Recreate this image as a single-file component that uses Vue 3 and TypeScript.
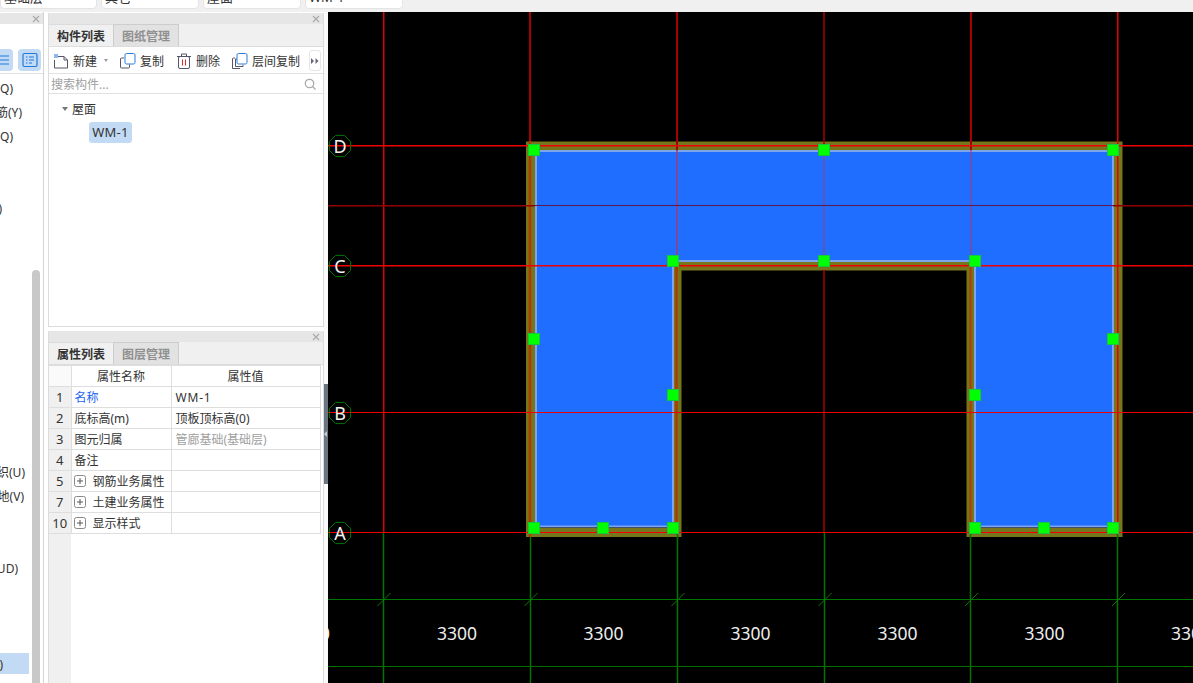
<template>
  <div class="root">
    <div class="topbar">
      <div v-for="c in combos" :key="c" class="combo">{{ c }}</div>
    </div>

    <div class="body">
      <!-- clipped left tree -->
      <aside class="strip">
        <div class="pane-head">
          <svg class="close" viewBox="0 0 8 8"><path d="M1 1l6 6M7 1L1 7" /></svg>
        </div>
        <div class="strip-tools">
          <div class="strip-btn first">
            <svg viewBox="0 0 13 22" width="13" height="22">
              <path d="M0 7h9M0 11h9M0 15h9" stroke="#1f7ae0" stroke-width="1.2" fill="none" />
            </svg>
          </div>
          <div class="strip-btn second">
            <svg viewBox="0 0 16 16" width="16" height="16">
              <rect x="1" y="1.5" width="14" height="13" rx="1.5" fill="none" stroke="#1f7ae0" stroke-width="1.2" />
              <path d="M4 5h1.5M7 5h5M4 8h1.5M7 8h5M4 11h1.5M7 11h3" stroke="#1f7ae0" stroke-width="1.1" fill="none" />
            </svg>
          </div>
        </div>
        <div class="strip-list">
          <div
            v-for="(r, i) in stripRows"
            :key="i"
            class="strip-row"
            :class="{ selected: r.selected }"
            :style="{ paddingRight: 29 - r.right + 'px' }"
          >
            {{ r.text }}
          </div>
        </div>
        <div class="strip-scroll"></div>
      </aside>

      <div class="middle">
        <section class="panel panel-top">
          <div class="pane-head">
            <svg class="close" viewBox="0 0 8 8"><path d="M1 1l6 6M7 1L1 7" /></svg>
          </div>
          <div class="tabs">
            <div class="tab active">构件列表</div>
            <div class="tab">图纸管理</div>
          </div>
          <div class="toolbar">
            <div class="tool tool-new">
              <svg viewBox="0 0 16 16" width="16" height="16">
                <path d="M4 3.5h7l3.5 3.5v8h-13V7" fill="none" stroke="#556" stroke-width="1" />
                <path d="M11 3.5V7h3.5" fill="none" stroke="#556" stroke-width="1" />
                <rect x="1" y="1" width="4" height="4" fill="#3b82e6" />
                <path d="M2 1v4M4 1v4M1 2h4M1 4h4" stroke="#fff" stroke-width=".5" />
              </svg>
              <span>新建</span>
              <i class="caret"></i>
            </div>
            <div class="tool tool-copy">
              <svg viewBox="0 0 16 16" width="16" height="16">
                <path d="M4 5H1.500a1 1 0 0 0-1 1v8a1 1 0 0 0 1 1h7a1 1 0 0 0 1-1v-2.500" fill="none" stroke="#556" />
                <rect x="5" y="0.500" width="10" height="10.500" rx="1.500" fill="#fff" stroke="#2b7de0" />
              </svg>
              <span>复制</span>
            </div>
            <div class="tool tool-del">
              <svg viewBox="0 0 14 16" width="14" height="16">
                <path d="M0 3.500h14M4.500 3V1h5v2" fill="none" stroke="#556" />
                <rect x="1.500" y="3.500" width="11" height="12" rx="1.500" fill="none" stroke="#556" />
                <path d="M5.500 6.500v6M8.500 6.500v6" stroke="#e0242c" />
              </svg>
              <span>删除</span>
            </div>
            <div class="tool tool-floor">
              <svg viewBox="0 0 16 16" width="16" height="16">
                <path d="M3 5H1.500a1 1 0 0 0-1 1v9.500H8" fill="none" stroke="#556" />
                <path d="M5 6H3.500v7.500H11V12" fill="none" stroke="#556" />
                <rect x="5" y="0.500" width="10" height="10.500" rx="1.500" fill="#fff" stroke="#2b7de0" />
              </svg>
              <span>层间复制</span>
            </div>
            <div class="more">
              <svg viewBox="0 0 8 6" width="8" height="6"><path d="M0 0l3 3-3 3zM4.500 0l3 3-3 3z" fill="#667" /></svg>
            </div>
          </div>
          <div class="search">
            <span>搜索构件...</span>
            <svg viewBox="0 0 12 12" width="12" height="12">
              <circle cx="5.500" cy="5.500" r="4.200" fill="none" stroke="#aaa" stroke-width="1.300" />
              <path d="M8.500 8.500l3 3" stroke="#aaa" stroke-width="1.300" />
            </svg>
          </div>
          <div class="tree">
            <div class="tree-node"><i class="tree-caret"></i>屋面</div>
            <div class="tree-leaf">WM-1</div>
          </div>
        </section>

        <section class="panel panel-bottom">
          <div class="pane-head">
            <svg class="close" viewBox="0 0 8 8"><path d="M1 1l6 6M7 1L1 7" /></svg>
          </div>
          <div class="tabs">
            <div class="tab active">属性列表</div>
            <div class="tab">图层管理</div>
          </div>
          <table class="props">
            <colgroup>
              <col class="c-num" />
              <col class="c-name" />
              <col class="c-val" />
            </colgroup>
            <thead>
              <tr>
                <th class="corner"></th>
                <th>属性名称</th>
                <th>属性值</th>
              </tr>
            </thead>
            <tbody>
              <tr v-for="p in props" :key="p.no">
                <td class="num">{{ p.no }}</td>
                <td :class="{ blue: p.blue }">
                  <div class="name-cell">
                    <svg v-if="p.group" class="plus" viewBox="0 0 12 12" width="12" height="12">
                      <rect x=".5" y=".5" width="11" height="11" rx="2" fill="#fff" stroke="#888" />
                      <path d="M3 6h6M6 3v6" stroke="#555" />
                    </svg>
                    {{ p.name }}
                  </div>
                </td>
                <td class="val" :class="{ muted: p.muted, wide: p.blue }">{{ p.value }}</td>
              </tr>
            </tbody>
          </table>
          <div class="num-rest"></div>
        </section>
      </div>

      <div class="sash">
        <div class="sash-handle"><i></i></div>
      </div>

      <div class="canvas">
        <svg class="cad" viewBox="328 12 865 671" width="865" height="671">
          <rect x="328" y="12" width="865" height="671" fill="#000" />

          <!-- roof slab: band, then fill -->
          <path class="band" d="M530.500 146H1118V532.500H971V266H677V532.500H530.500Z" />
          <path class="slab" d="M536 151H1113V526.500H975V261H673V526.500H536Z" />

          <line
            v-for="(l, i) in lines"
            :key="i"
            :x1="l[0]"
            :y1="l[1]"
            :x2="l[2]"
            :y2="l[3]"
            :stroke="l[4]"
            :stroke-width="l[5] ?? 1"
          />

          <line
            v-for="x in gridX"
            :key="'tick' + x"
            :x1="x - 6"
            y1="606"
            :x2="x + 7"
            y2="593"
            stroke="#0a7a0a"
          />

          <rect
            v-for="(n, i) in nodes"
            :key="'n' + i"
            class="node"
            :x="n[0] - 5.500"
            :y="n[1] - 5.500"
            width="11"
            height="11"
          />

          <g v-for="a in axes" :key="a.label">
            <polygon class="bubble" :points="octagon(340, a.y)" />
            <text class="axis-label" x="340" :y="a.y + 6.500">{{ a.label }}</text>
          </g>

          <text v-for="x in dimX" :key="x" class="dim" :x="x" y="640">3300</text>
        </svg>
      </div>
    </div>
  </div>
</template>

<script setup lang="ts">
const combos = ["基础层", "其它", "屋面", "WM-1"];

const stripRows = [
  { text: "剪力墙(Q)", right: 13 },
  { text: "砌体加筋(Y)", right: 22 },
  { text: "砌体墙(Q)", right: 13 },
  { text: "", right: 0 },
  { text: "", right: 0 },
  { text: "门联窗(A)", right: 2 },
  ...Array.from({ length: 10 }, () => ({ text: "", right: 0 })),
  { text: "垫层组织(U)", right: 25 },
  { text: "集水坑地(V)", right: 24 },
  { text: "", right: 0 },
  { text: "", right: 0 },
  { text: "自定义(UD)", right: 18 },
  { text: "", right: 0 },
  { text: "", right: 0 },
  { text: "", right: 0 },
  { text: "屋面(W)", right: 3, selected: true },
];

const props = [
  { no: 1, name: "名称", value: "WM-1", blue: true },
  { no: 2, name: "底标高(m)", value: "顶板顶标高(0)" },
  { no: 3, name: "图元归属", value: "管廊基础(基础层)", muted: true },
  { no: 4, name: "备注", value: "" },
  { no: 5, name: "钢筋业务属性", value: "", group: true },
  { no: 7, name: "土建业务属性", value: "", group: true },
  { no: 10, name: "显示样式", value: "", group: true },
];

const RED = "#f00000";
const DARK = "#a80000";
const GREEN = "#007400";
const OVER_BLUE = "#a03c70";
const IN_BAND = "#b03c00";

type Seg = [number, number, number, number, string, number?];

const lines: Seg[] = [
  // verticals above the A axis
  [383.75, 12, 383.75, 533, "#e00000", 1.5],
  [530, 12, 530, 141, DARK, 2],
  [530, 141, 530, 537, IN_BAND, 2.5],
  [677, 12, 677, 150, DARK, 2],
  [677, 150, 677, 261, OVER_BLUE, 1.5],
  [676.5, 261, 676.5, 533, IN_BAND, 2.5],
  [824, 12, 824, 150, DARK, 1.5],
  [824, 150, 824, 261, OVER_BLUE],
  [824, 270, 824, 533, DARK, 1.5],
  [971, 12, 971, 150, DARK, 2],
  [971, 150, 971, 261, OVER_BLUE],
  [970.5, 261, 970.5, 533, IN_BAND, 2],
  [1117.75, 12, 1117.75, 533, "#e80000", 1.5],
  // same axes below A turn green
  [383.5, 533, 383.5, 683, GREEN, 1.5],
  [530.5, 537, 530.5, 683, GREEN, 1.5],
  [677.5, 533, 677.5, 683, GREEN, 1.5],
  [824.5, 533, 824.5, 683, GREEN, 1.5],
  [970.5, 533, 970.5, 683, GREEN, 1.5],
  [1117.5, 533, 1117.5, 683, GREEN, 1.5],
  // horizontals
  [328, 145.75, 1193, 145.75, RED, 1.5],
  [328, 205.75, 535, 205.75, "#900000", 1.5],
  [535, 205.5, 1113, 205.5, "#5a1a50"],
  [1113, 205.75, 1193, 205.75, "#900000", 1.5],
  [328, 265.75, 1193, 265.75, RED, 1.5],
  [328, 412.5, 1193, 412.5, RED],
  [328, 532.5, 1193, 532.5, RED],
  [328, 599.5, 1193, 599.5, GREEN],
  [328, 666.5, 1193, 666.5, "#007000"],
];

const gridX = [383.5, 530.5, 677.5, 824.5, 971, 1118];

const nodes = [
  [534, 150], [824, 150], [1113, 150],
  [673, 261], [824, 261], [975, 261],
  [534, 339], [1113, 339],
  [673, 395], [975, 395],
  [534, 528], [603, 528], [673, 528], [975, 528], [1044, 528], [1113, 528],
];

const axes = [
  { label: "D", y: 146 },
  { label: "C", y: 266 },
  { label: "B", y: 413 },
  { label: "A", y: 533 },
];

const dimX = [310, 457, 603.5, 750.5, 897.5, 1044.5, 1191];

const octagon = (cx: number, cy: number) => {
  const pts: string[] = [];
  for (let i = 0; i < 8; i++) {
    const a = (Math.PI / 4) * i + Math.PI / 8;
    pts.push(`${(cx + 11.5 * Math.cos(a)).toFixed(1)},${(cy + 11.5 * Math.sin(a)).toFixed(1)}`);
  }
  return pts.join(" ");
};
</script>

<style scoped>
.root {
  width: 1193px;
  height: 683px;
  overflow: hidden;
  display: flex;
  flex-direction: column;
  background: #f0f0f0;
  color: #333;
  font: 12px "Noto Sans", "Noto Sans CJK SC", sans-serif;
}

/* combos, only their lower edge shows */
.topbar {
  height: 12px;
  flex: none;
  display: flex;
  gap: 4px;
  overflow: hidden;
}
.combo {
  width: 98px;
  height: 20px;
  margin-top: -11px;
  padding-left: 3px;
  box-sizing: border-box;
  line-height: 14px;
  background: #fff;
  border: 1px solid #e4e4e4;
  border-radius: 4px;
  font-size: 13px;
}
.combo:first-child {
  width: 97px;
}

.body {
  flex: 1;
  min-height: 0;
  display: flex;
  background: #fff;
}

.pane-head {
  height: 11px;
  flex: none;
  background: #e6e6e6;
  display: flex;
  align-items: center;
  justify-content: flex-end;
  padding-right: 3px;
}
.close {
  width: 8px;
  height: 8px;
  fill: none;
  stroke: #a8a8a8;
  stroke-width: 1.1;
}

.strip {
  width: 44px;
  flex: none;
  box-sizing: border-box;
  border-right: 1px solid #d4d4d4;
  padding-top: 1px;
  position: relative;
  overflow: hidden;
}
.strip-tools {
  height: 50px;
  box-sizing: border-box;
  padding-top: 25px;
  border-bottom: 1px solid #e0e0e0;
  background: #fff;
  display: flex;
  align-items: flex-start;
  gap: 5px;
}
.strip-btn {
  height: 22px;
  background: #c2daf3;
  border-radius: 4px;
  display: flex;
  align-items: center;
  justify-content: center;
}
.strip-btn.first {
  width: 13px;
  border-radius: 0 4px 4px 0;
}
.strip-btn.second {
  width: 23px;
}
.strip-list {
  width: 29px;
  padding-top: 2px;
}
.strip-row {
  height: 24px;
  display: flex;
  justify-content: flex-end;
  align-items: center;
  white-space: nowrap;
  overflow: hidden;
  box-sizing: border-box;
}
.strip-row.selected {
  background: #c2daf3;
  height: 21px;
  margin-top: 1px;
}
.strip-scroll {
  position: absolute;
  left: 32px;
  top: 258px;
  bottom: 0;
  width: 8px;
  background: #c8c8c8;
  border-radius: 4px 4px 0 0;
}

.middle {
  width: 276px;
  flex: none;
  margin-left: 4px;
  padding-top: 1px;
  display: flex;
  flex-direction: column;
  gap: 4px;
  background: #fff;
}
.panel {
  box-sizing: border-box;
  border: solid #dcdcdc;
  border-width: 0 1px 1px;
  display: flex;
  flex-direction: column;
  background: #fff;
  overflow: hidden;
}
.panel-top {
  height: 314px;
  flex: none;
}
.panel-bottom {
  flex: 1;
  min-height: 0;
  border-bottom: 0;
}

.tabs {
  height: 23px;
  flex: none;
  display: flex;
  background: #f0f0f0;
  border-bottom: 1px solid #dcdcdc;
  box-sizing: border-box;
}
.tab {
  width: 65px;
  text-align: center;
  line-height: 23px;
  font-weight: 700;
  color: #909090;
  background: #e2e2e2;
  border: solid #cdcdcd;
  border-width: 1px 1px 0 0;
  box-sizing: border-box;
}
.tab.active {
  color: #333;
  background: #f0f0f0;
  border-left: 0;
  border-top-color: #dcdcdc;
}

.toolbar {
  height: 27px;
  flex: none;
  padding-top: 1px;
  display: flex;
  align-items: center;
  border-bottom: 1px solid #e2e2e2;
  box-sizing: border-box;
  position: relative;
}
.tool {
  display: flex;
  align-items: center;
  gap: 4px;
  white-space: nowrap;
}
.tool-new {
  margin-left: 4px;
}
.tool-copy {
  margin-left: 12px;
}
.tool-del {
  margin-left: 13px;
  gap: 5px;
}
.tool-floor {
  margin-left: 12px;
}
.caret {
  width: 0;
  height: 0;
  margin-left: 3px;
  border: 2.5px solid transparent;
  border-top: 3px solid #999;
  border-bottom: 0;
}
.more {
  margin-left: auto;
  margin-right: 2px;
  width: 10px;
  height: 19px;
  border: 1px solid #e6e6e6;
  border-radius: 3px;
  display: flex;
  align-items: center;
  justify-content: center;
  box-sizing: content-box;
}

.search {
  height: 20px;
  flex: none;
  display: flex;
  align-items: center;
  justify-content: space-between;
  padding: 1px 7px 0 2px;
  border-bottom: 1px solid #e2e2e2;
  box-sizing: border-box;
  color: #a0a0a0;
}

.tree {
  padding: 5px 0 0 13px;
}
.tree-node {
  display: flex;
  align-items: center;
  height: 20px;
}
.tree-caret {
  width: 0;
  height: 0;
  margin-right: 4px;
  border: 3px solid transparent;
  border-top: 4px solid #777;
  border-bottom: 0;
}
.tree-leaf {
  margin: 3px 0 0 27px;
  width: 43px;
  height: 21px;
  line-height: 21px;
  text-align: center;
  font-size: 13px;
  letter-spacing: 0.3px;
  background: #c2daf3;
  border-radius: 3px;
}

.props {
  width: 271px;
  flex: none;
  table-layout: fixed;
  border-collapse: collapse;
}
.c-num {
  width: 22px;
}
.c-name {
  width: 100px;
}
.c-val {
  width: 149px;
}
.props th,
.props td {
  height: 21px;
  padding: 0 0 0 3px;
  border: 1px solid #dedede;
  box-sizing: border-box;
  font-weight: 400;
  white-space: nowrap;
  overflow: hidden;
}
.props th {
  text-align: center;
  padding: 0;
}
.props tr > :first-child {
  border-left: 0;
}
.props td.num {
  padding: 0;
  text-align: center;
  font-size: 13px;
  background: #f0f0f0;
}
.props td.val {
  padding-left: 4px;
}
.corner {
  background: #fafafa;
}
.name-cell {
  display: flex;
  align-items: center;
}
.plus {
  flex: none;
  margin: 0 7px 0 -1px;
}
.blue {
  color: #2463f0;
}
.wide {
  letter-spacing: 0.8px;
}
.muted {
  color: #a0a0a0;
}
.num-rest {
  flex: 1;
  width: 22px;
  background: #f0f0f0;
}

.sash {
  width: 4px;
  flex: none;
  background: #fafafa;
}
.sash-handle {
  height: 100px;
  margin-top: 372px;
  background: #6b7682;
  display: flex;
  align-items: center;
}
.sash-handle i {
  width: 0;
  height: 0;
  border: 3px solid transparent;
  border-right: 3px solid #c8ccd0;
  border-left: 0;
}

.canvas {
  flex: 1;
  min-width: 0;
  line-height: 0;
}
.cad {
  display: block;
}
.band {
  fill: none;
  stroke: #76761c;
  stroke-width: 9;
  stroke-linejoin: miter;
}
.slab {
  fill: #1f6eff;
  stroke: #7fa4ea;
  stroke-width: 2;
}
.node {
  fill: #00ff00;
  stroke: #14c83c;
  stroke-width: 1;
}
.bubble {
  fill: none;
  stroke: #007800;
  stroke-width: 1;
}
.axis-label {
  fill: #f2f2f2;
  font-size: 18px;
  text-anchor: middle;
}
.dim {
  fill: #eeeeee;
  font-size: 17.5px;
  text-anchor: middle;
}
</style>
